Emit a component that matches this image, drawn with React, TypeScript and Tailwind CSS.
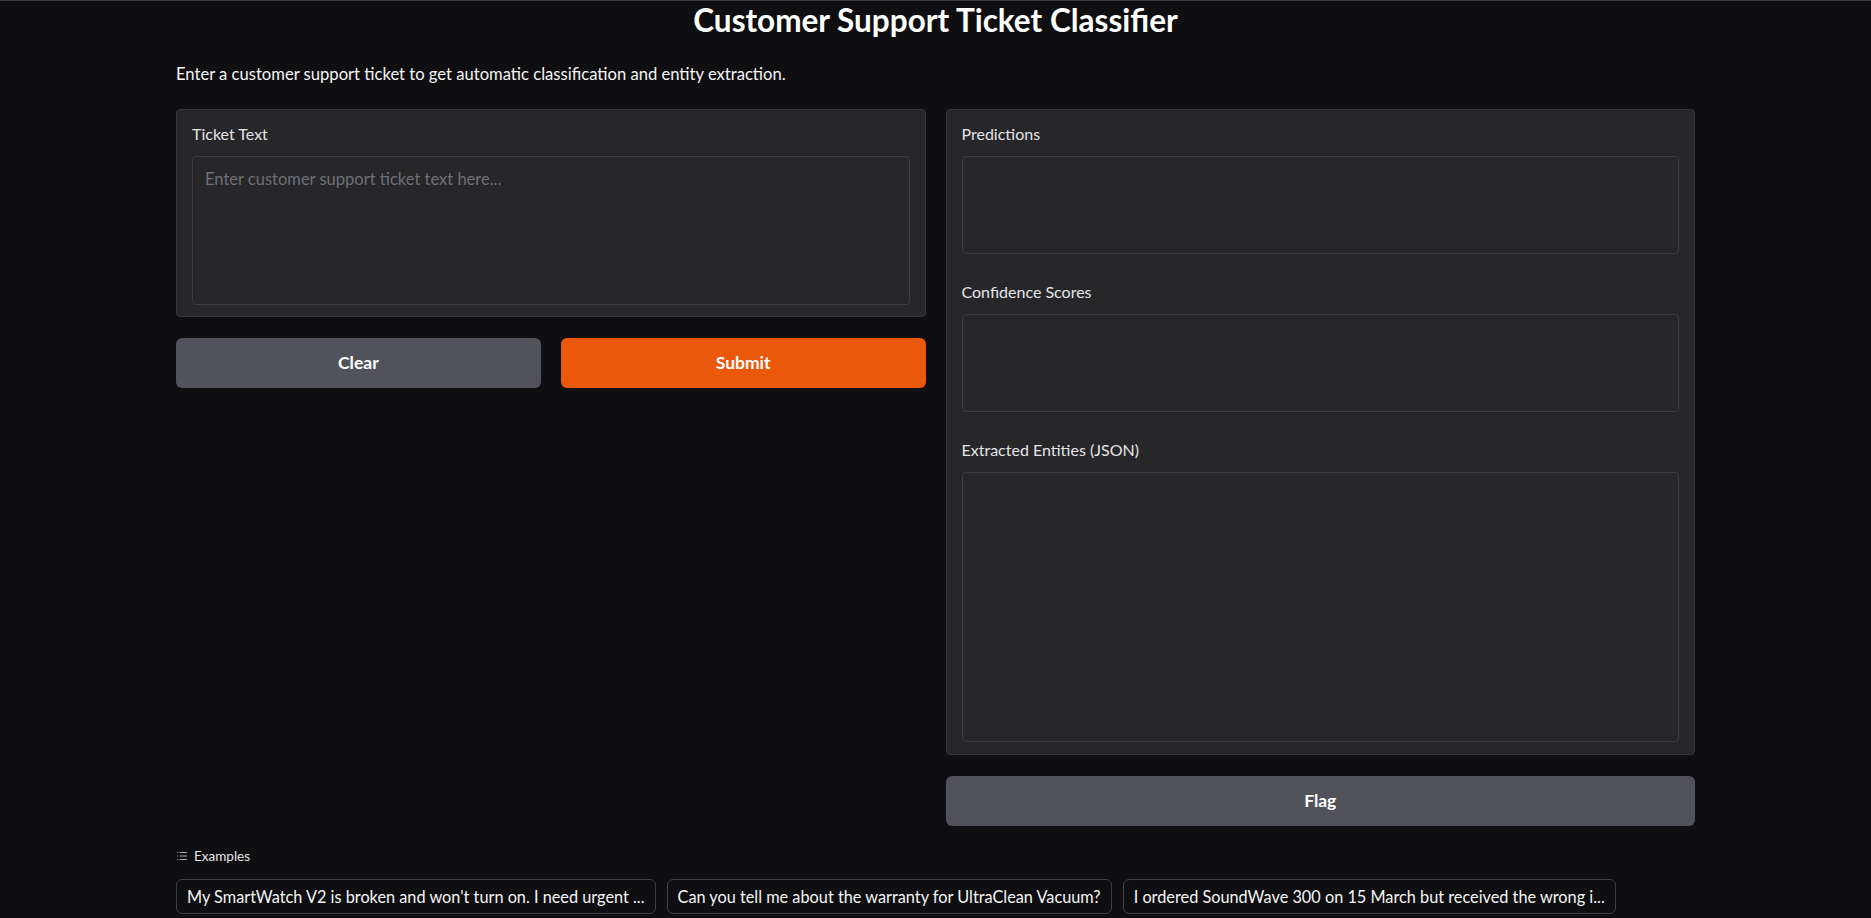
import React from "react";
import { List } from "lucide-react";

const outputs = [
  { label: "Predictions", h: "h-[98px]" },
  { label: "Confidence Scores", h: "h-[98px]" },
  { label: "Extracted Entities (JSON)", h: "h-[270px]" },
];

const examples = [
  "My SmartWatch V2 is broken and won't turn on. I need urgent ...",
  "Can you tell me about the warranty for UltraClean Vacuum?",
  "I ordered SoundWave 300 on 15 March but received the wrong i...",
];

export default function App() {
  return (
    <div className="min-h-screen bg-[#0f0f11] border-t border-[#3a3a3e] text-[#f4f4f5] font-['Lato','Noto_Sans',sans-serif]">
      <div className="w-[1519px] mx-auto">
        <h1 className="text-center text-[31.5px] leading-[38px] font-bold text-white">
          Customer Support Ticket Classifier
        </h1>
        <p className="mt-[24px] text-[16.6px] leading-[22px] text-[#f4f4f5]">
          Enter a customer support ticket to get automatic classification and entity extraction.
        </p>

        <div className="mt-[24px] grid grid-cols-2 gap-5 items-start">
          {/* left column */}
          <div className="flex flex-col gap-[21px]">
            <div className="bg-[#27272a] border border-[#37373b] rounded-[4px] px-[15px] pt-[15px] pb-[11px]">
              <div className="text-[16px] leading-[17px] text-[#e4e4e7]">Ticket Text</div>
              <textarea
                placeholder="Enter customer support ticket text here..."
                className="block mt-[14px] w-full h-[149px] resize-none bg-[#27272a] border border-[#3c3c41] rounded-[4px] px-[12px] py-[11px] text-[16.5px] leading-[22px] placeholder:text-[#6f6f77] outline-none"
              />
            </div>
            <div className="grid grid-cols-2 gap-5">
              <button className="h-[50px] rounded-[6px] bg-[#52525b] text-white font-bold text-[17.5px]">Clear</button>
              <button className="h-[50px] rounded-[6px] bg-[#ea580c] text-white font-bold text-[17.5px]">Submit</button>
            </div>
          </div>

          {/* right column */}
          <div className="flex flex-col gap-[21px]">
            <div className="bg-[#27272a] border border-[#37373b] rounded-[4px] px-[15px] pt-[15px] pb-[12px] flex flex-col gap-[29px]">
              {outputs.map((o) => (
                <div key={o.label}>
                  <div className="text-[16px] leading-[17px] text-[#e4e4e7]">{o.label}</div>
                  <div className={`mt-[14px] w-full ${o.h} border border-[#3c3c41] rounded-[4px]`} />
                </div>
              ))}
            </div>
            <button className="h-[50px] rounded-[6px] bg-[#52525b] text-white font-bold text-[17.5px]">Flag</button>
          </div>
        </div>

        <div className="mt-[20px] flex items-center gap-[6px] text-[13.5px] text-[#e4e4e7]">
          <List size={12} strokeWidth={1.5} />
          <span>Examples</span>
        </div>
        <div className="mt-[13px] flex gap-[11px]">
          {examples.map((e) => (
            <button
              key={e}
              className="h-[35px] px-[10px] rounded-[6px] border border-[#3f3f46] bg-[#0f0f11] text-[16.3px] text-[#f4f4f5] whitespace-nowrap"
            >
              {e}
            </button>
          ))}
        </div>
      </div>
    </div>
  );
}
